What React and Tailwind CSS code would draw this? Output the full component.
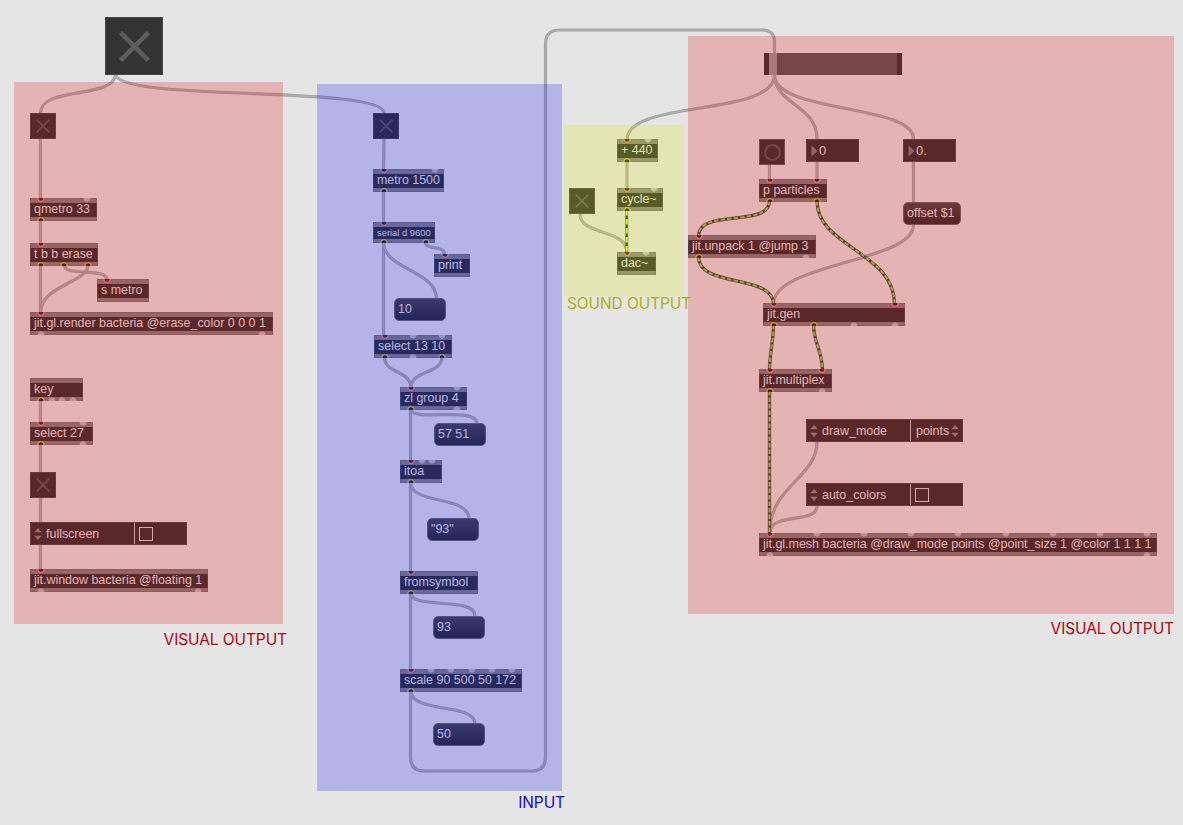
import React from 'react';

// ins / outs are connected ports, freeIns / freeOuts have no cord
const objects = [
  { x: 30, y: 198, w: 67, text: 'qmetro 33', ins: [10.5], freeIns: [56.5], outs: [10.5] },
  { x: 30, y: 243, w: 68, text: 't b b erase', ins: [10.5], outs: [10.5, 34.3, 58] },
  { x: 97, y: 279, w: 52, text: 's metro', ins: [10] },
  { x: 30, y: 312, w: 243, text: 'jit.gl.render bacteria @erase_color 0 0 0 1', ins: [10.5], freeOuts: [10.5, 232] },
  { x: 30, y: 378, w: 53, text: 'key', outs: [10.5], freeOuts: [21.5, 32, 43] },
  { x: 30, y: 422, w: 63, text: 'select 27', ins: [10.5], freeIns: [52.5], outs: [10.5], freeOuts: [52.5] },
  { x: 30, y: 569, w: 178, text: 'jit.window bacteria @floating 1', ins: [10.5], freeOuts: [10.5, 168] },
  { x: 373, y: 169, w: 71, text: 'metro 1500', ins: [10.5], freeIns: [61.5], outs: [10.5] },
  { x: 373, y: 222, w: 62, text: 'serial d 9600', small: true, ins: [10.5], outs: [10.5, 52.5] },
  { x: 434, y: 254, w: 36, text: 'print', ins: [10.5] },
  { x: 374, y: 335, w: 78, text: 'select 13 10', ins: [10.5], freeIns: [39.3, 68], outs: [10.5, 68], freeOuts: [39.3] },
  { x: 400, y: 387, w: 67, text: 'zl group 4', ins: [11], freeIns: [56.5], outs: [11], freeOuts: [56.5] },
  { x: 400, y: 460, w: 42, text: 'itoa', ins: [11], freeIns: [21.5, 32.3], outs: [11] },
  { x: 400, y: 571, w: 78, text: 'fromsymbol', ins: [11], outs: [11] },
  { x: 400, y: 669, w: 122, text: 'scale 90 500 50 172', ins: [11], freeIns: [31, 51.3, 71.5, 91.7, 112], outs: [11] },
  { x: 617, y: 139, w: 41, text: '+ 440', ins: [10], freeIns: [31], outs: [10] },
  { x: 617, y: 188, w: 46, text: 'cycle~', ins: [10], freeIns: [36.5], outs: [10] },
  { x: 617, y: 252, w: 39, text: 'dac~', ins: [10], freeIns: [28.5] },
  { x: 759, y: 179, w: 68, text: 'p particles', ins: [10.5, 58], outs: [10.5, 58] },
  { x: 688, y: 235, w: 128, text: 'jit.unpack 1 @jump 3', ins: [10.5], outs: [10.5], freeOuts: [118] },
  { x: 763, y: 303, w: 142, text: 'jit.gen', ins: [10.5, 131.5], outs: [10.5, 50.7], freeOuts: [91, 131.5] },
  { x: 759, y: 369, w: 73, text: 'jit.multiplex', ins: [10.5, 63.3], outs: [10.5], freeOuts: [63.3] },
  {
    x: 759,
    y: 533,
    w: 398,
    text: 'jit.gl.mesh bacteria @draw_mode points @point_size 1 @color 1 1 1 1',
    ins: [10.5],
    freeIns: [57.7, 105, 152, 199.3, 246.5, 293.7, 341, 388],
    freeOuts: [10.5, 388],
  },
];

const messages = [
  { x: 394, y: 298, w: 52, text: '10' },
  { x: 434, y: 423, w: 52, text: '57 51' },
  { x: 427, y: 518, w: 52, text: '"93"' },
  { x: 433, y: 616, w: 52, text: '93' },
  { x: 433, y: 723, w: 52, text: '50' },
  { x: 903, y: 202, w: 58, text: 'offset $1' },
];

const toggles = [
  { x: 105, y: 17, size: 58, big: true },
  { x: 30, y: 113, size: 26 },
  { x: 30, y: 472, size: 26 },
  { x: 373, y: 113, size: 26 },
  { x: 569, y: 188, size: 26 },
];

const numbers = [
  { x: 806, y: 139, text: '0' },
  { x: 903, y: 139, text: '0.' },
];

const cords = [
  'M115.5 74 C115.5 99 40.5 86 40.5 113',
  'M115.5 74 C115.5 102 384 85 384 113',
  'M40.5 139 V199',
  'M40.5 220 V244',
  'M40.5 265 V313',
  'M64 265 C64 277 107 267 107 280',
  'M88 265 C88 283 40.5 285 40.5 313',
  'M40.5 400 V423',
  'M40.5 444 V472',
  'M40.5 498 V522',
  'M40.5 544 V570',
  'M384 139 L383.5 170',
  'M383.5 191 V222',
  'M383.5 242 V336',
  'M383.5 242 C383.5 270 436.5 270 436.5 299',
  'M425.5 242 C425.5 251 444.5 244 444.5 255',
  'M384.5 357 C384.5 374 411 370 411 388',
  'M442 357 C442 374 411 370 411 388',
  'M410.5 409 V461',
  'M411 409 C411 423 477 405 477 424',
  'M410.5 483 V571',
  'M411 483 C411 505 469 495 469 519',
  'M410.5 593 V670',
  'M411 593 C411 610 475 596 475 616',
  'M411 691 C411 714 475 702 475 724',
  'M410.5 691 V757 Q410.5 771 424.5 771 H531.5 Q545.5 771 545.5 757 V44 Q545.5 30 559.5 30 H762 Q774.5 30 774.5 42 V54',
  'M774.5 75 C774.5 117 627 99 627 140',
  'M774.5 75 C774.5 104 817 105 817 139',
  'M774.5 75 C774.5 113 913.5 104 913.5 139',
  'M627 161 V189',
  'M580 214 C580 236 627 228 627 253',
  'M769.5 165 V180',
  'M817 162 V180',
  'M913.5 162 V203',
  'M913.5 225 C913.5 262 773.5 263 773.5 304',
  'M817 442 C817 477 770 487 770 531',
  'M817 506 C817 524 772 512 770 532',
];

const matrixCords = [
  'M769.5 201 C769.5 228 698.5 208 698.5 236',
  'M817 201 C817 247 894.5 252 894.5 304',
  'M698.5 257 C698.5 288 773.5 274 773.5 304',
  'M773.5 325 C773.5 340 769.5 355 769.5 370',
  'M813.5 325 C813.5 342 822.5 352 822.5 370',
  'M769.5 391 V534',
];

function Inlets({ list = [], free }) {
  return list.map((x) => (
    <svg key={x} viewBox="0 0 8 5" className="absolute top-0 h-[5px] w-2" style={{ left: x - 4 }}>
      <path d="M0.9 0 A3.1 3.3 0 0 0 7.1 0" fill={free ? '#bdbdbd' : '#333333'} stroke={free ? '#bdbdbd' : '#f08a80'} strokeWidth={free ? 0.8 : 1.3} />
    </svg>
  ));
}

function Outlets({ list = [], free }) {
  return list.map((x) => (
    <svg key={x} viewBox="0 0 8 5" className="absolute bottom-0 h-[5px] w-2" style={{ left: x - 4 }}>
      <path d="M0.9 5 A3.1 3.3 0 0 1 7.1 5" fill={free ? '#bdbdbd' : '#2c2c2c'} stroke={free ? '#bdbdbd' : '#ccc050'} strokeWidth={free ? 0.8 : 1.3} />
    </svg>
  ));
}

function Label({ children }) {
  return <span className="relative z-10 inline-block origin-left scale-x-[0.957] whitespace-nowrap">{children}</span>;
}

function PatchObject({ node }) {
  return (
    <div
      className={`absolute flex flex-col border-x border-[#4c4c4c] bg-[#333333] ${node.small ? 'h-[21px] text-[9.8px]' : 'h-[23px] text-[13px]'}`}
      style={{ left: node.x, top: node.y, width: node.w }}
    >
      <div className="-mx-px h-[5px] shrink-0 border border-b-0 border-[#747474] bg-[#828282]" />
      <div className={`flex min-h-0 flex-1 items-center ${node.small ? 'pb-px' : 'pb-[3px]'} pl-[3.3px]`}>
        <Label>{node.text}</Label>
      </div>
      <div className="-mx-px h-[4px] shrink-0 border border-t-0 border-[#747474] bg-[#828282]" />
      <div className="absolute inset-y-0 -left-px">
        <Inlets list={node.freeIns} free />
        <Inlets list={node.ins} />
        <Outlets list={node.freeOuts} free />
        <Outlets list={node.outs} />
      </div>
    </div>
  );
}

function Toggle({ node }) {
  return (
    <div
      className="absolute flex items-center justify-center border border-[#484848] bg-[#333333]"
      style={{ left: node.x, top: node.y, width: node.size, height: node.size }}
    >
      <svg viewBox="0 0 30 30" className={node.big ? 'size-[31px]' : 'size-[14px]'}>
        <path d="M1.5 1.5 L28.5 28.5 M28.5 1.5 L1.5 28.5" stroke="#5c5c5c" strokeWidth={node.big ? 4.5 : 3.6} />
      </svg>
    </div>
  );
}

function Arrows() {
  return (
    <svg viewBox="0 0 8 14" className="h-[14px] w-2 shrink-0">
      <path d="M0.3 5.3 L4 1 L7.7 5.3 Z M0.3 8.7 L4 13 L7.7 8.7 Z" fill="#8a8a8a" />
    </svg>
  );
}

function Attribute({ x, y, name, value }) {
  return (
    <div
      className="absolute flex h-[23px] w-[157px] items-center border border-[#4a4a4a] bg-[#333333] text-[13px] whitespace-nowrap"
      style={{ left: x, top: y }}
    >
      <div className="flex h-full w-[104px] items-center gap-1 border-r border-[#c4c4c4] pl-[3px]">
        <Arrows />
        <Label>{name}</Label>
      </div>
      {value ? (
        <div className="flex items-center pl-[5px]">
          <Label>{value}</Label>
          <Arrows />
        </div>
      ) : (
        <div className="ml-1 size-[14px] border border-[#d8d8d8]" />
      )}
    </div>
  );
}

function NumberBox({ node }) {
  return (
    <div
      className="absolute flex h-[23px] w-[53px] items-center border border-[#4a4a4a] bg-[#333333] pl-[4px] text-[13px]"
      style={{ left: node.x, top: node.y }}
    >
      <svg viewBox="0 0 7 12" className="h-3 w-[7px]">
        <path d="M0.5 0.5 L6.5 6 L0.5 11.5 Z" fill="#808080" />
      </svg>
      <span className="pb-px pl-px">{node.text}</span>
    </div>
  );
}

export default function App() {
  return (
    <div className="relative h-[825px] w-[1183px] overflow-hidden bg-[#e5e5e5] font-['Liberation_Sans',Arial,sans-serif] leading-none text-[#e2e2e2]">
      <svg viewBox="0 0 1183 825" className="absolute inset-0 h-full w-full" fill="none">
        {cords.map((d) => (
          <g key={d}>
            <path d={d} stroke="#a3a5a4" strokeWidth="3.2" />
            <path d={d} stroke="#b0b1b0" strokeWidth="1.2" />
          </g>
        ))}
        {matrixCords.map((d) => (
          <g key={d}>
            <path d={d} stroke="#4b4440" strokeWidth="3.3" />
            <path d={d} stroke="#76dc58" strokeWidth="2" strokeDasharray="4.5 2" />
          </g>
        ))}
        <path d="M626.7 210 V253" stroke="#6a7040" strokeWidth="3" />
        <path d="M626.7 210 V253" stroke="#3a3c20" strokeWidth="2" />
        <path d="M626.7 210 V253" stroke="#d0ff40" strokeWidth="2" strokeDasharray="5.5 3.5" />
      </svg>

      {/* slider */}
      <div className="absolute top-[53px] left-[764px] flex h-[22px] w-[138px] border-x-[5px] border-[#333333] bg-[#595959]">
        <div className="w-[7.5px] bg-[#9a9a9a]" />
      </div>

      {/* bang */}
      <div className="absolute top-[139px] left-[759px] flex size-[26px] items-center justify-center border border-[#606060] bg-[#333333]">
        <div className="size-[17px] rounded-full border-2 border-[#595959]" />
      </div>

      {objects.map((node) => (
        <PatchObject key={node.text} node={node} />
      ))}
      {toggles.map((node) => (
        <Toggle key={`${node.x}-${node.y}`} node={node} />
      ))}
      {numbers.map((node) => (
        <NumberBox key={node.x} node={node} />
      ))}
      {messages.map((node) => (
        <div
          key={node.text}
          className="absolute flex h-[23px] items-center rounded-[5px] border border-[#686868] bg-linear-to-b from-[#484848] to-[#2e2e2e] pb-[2px] pl-[3px] text-[13px]"
          style={{ left: node.x, top: node.y, width: node.w }}
        >
          <Label>{node.text}</Label>
        </div>
      ))}
      <Attribute x={30} y={522} name="fullscreen" />
      <Attribute x={806} y={419} name="draw_mode" value="points" />
      <Attribute x={806} y={483} name="auto_colors" />

      {/* tinted regions lie over the patch, each with its caption below */}
      <div className="absolute inset-0 z-20 font-['Inter',sans-serif] text-[15.5px] leading-4 tracking-[-0.1px] whitespace-nowrap">
        <div className="absolute top-[82px] left-[14px] flex w-[273px] flex-col gap-2">
          <div className="h-[542px] w-[269px] bg-[#e60008]/22" />
          <div className="self-end text-[#b00610]">VISUAL OUTPUT</div>
        </div>
        <div className="absolute top-[84px] left-[317px] flex w-[248px] flex-col gap-1">
          <div className="h-[707px] w-[245px] bg-[#0808f7]/22" />
          <div className="self-end text-[#1204e6]">INPUT</div>
        </div>
        <div className="absolute top-[36px] left-[688px] flex w-[486px] flex-col gap-[7px]">
          <div className="h-[578px] bg-[#e60008]/22" />
          <div className="self-end text-[#b00610]">VISUAL OUTPUT</div>
        </div>
        <div className="absolute top-[125px] left-[564px] flex w-[120px] flex-col">
          <div className="h-[171px] bg-[#dfe600]/22" />
          <div className="pl-[3px] text-[#adb400]">SOUND OUTPUT</div>
        </div>
      </div>
    </div>
  );
}
